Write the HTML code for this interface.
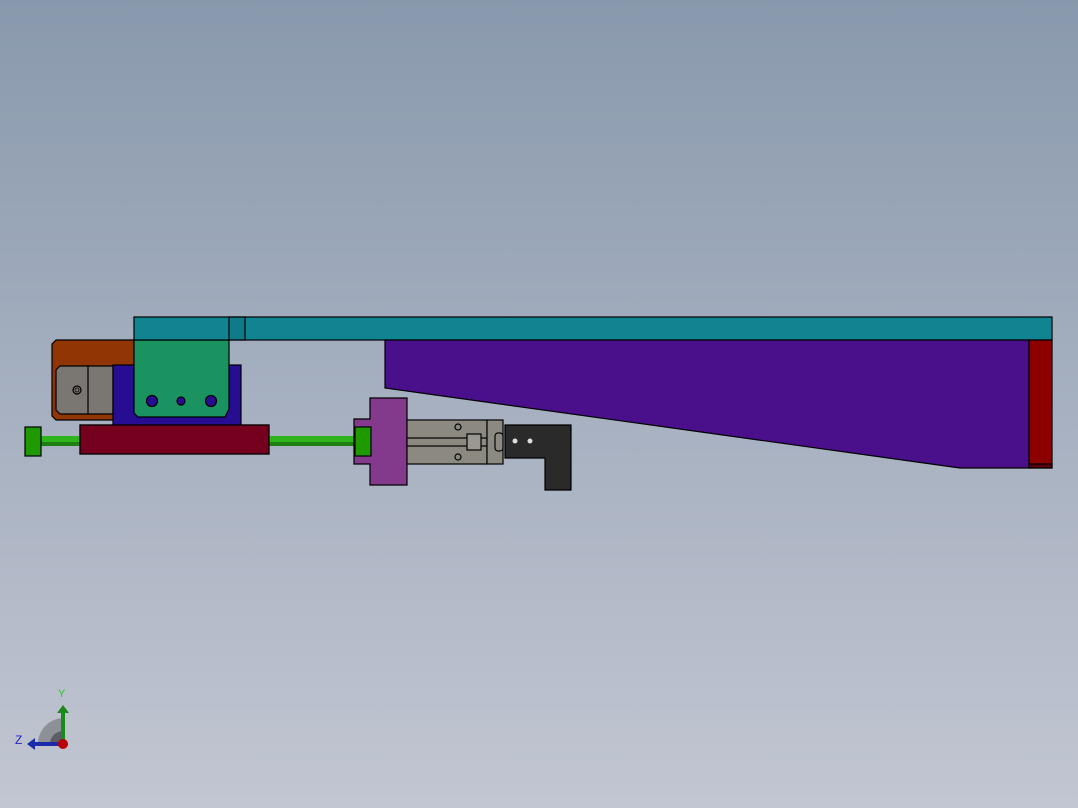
<!DOCTYPE html>
<html style="margin:0;padding:0;width:1078px;height:808px;overflow:hidden;background:#c2c6d2"><head><style>body{margin:0;padding:0;width:1078px;height:808px;overflow:hidden;background:linear-gradient(#8999ad,#a6b0c0 50%,#c2c6d2)}svg{display:block}</style></head><body>
<svg width="1078" height="808" viewBox="0 0 1078 808" xmlns="http://www.w3.org/2000/svg" stroke="#000" stroke-width="1.2">
<path d="M56,340 H134 V420 H56 L52,416 V344 Z" fill="#923505"/>
<path d="M60,366 H113 V414 H60 L56,410 V370 Z" fill="#7a7672"/>
<line x1="88" y1="366" x2="88" y2="414"/>
<circle cx="77" cy="390" r="4" fill="none"/><circle cx="77" cy="390" r="2" fill="none" stroke-width="0.8"/>
<rect x="113" y="365" width="128" height="65" fill="#260d91"/>
<rect x="80" y="425" width="189" height="29" fill="#74001d"/>
<path d="M134,340 H229 V409 L225,417 H138 L134,413 Z" fill="#1a9360"/>
<circle cx="152" cy="401" r="5.5" fill="#260d91"/><circle cx="181" cy="401" r="4" fill="#260d91"/><circle cx="211" cy="401" r="5.5" fill="#260d91"/>
<rect x="134" y="317" width="918" height="23" fill="#108591"/>
<rect x="229" y="317" width="16" height="23" fill="#0f7a88"/>
<path d="M385,340 H1029 V468 H960 L385,388 Z" fill="#4a108c"/>
<rect x="1029" y="340" width="23" height="128" fill="#8c0000"/>
<rect x="1029" y="464" width="23" height="4" fill="#5a0010"/>
<rect x="41" y="436" width="314" height="10" fill="#2fb51b" stroke="none"/>
<rect x="41" y="442" width="314" height="4" fill="#1e8012" stroke="none"/>
<rect x="80" y="425" width="189" height="29" fill="#74001d"/>
<rect x="25" y="427" width="16" height="29" fill="#1e9a00"/>
<path d="M370,398 H407 V485 H370 V464 H354 V419 H370 Z" fill="#833a8d"/>
<rect x="355" y="427" width="16" height="29" fill="#1e9a00"/>
<rect x="407" y="420" width="80" height="44" fill="#8c8a80"/>
<rect x="407" y="438" width="80" height="8" fill="#8c8a80"/>
<rect x="467" y="434" width="14" height="16" fill="#9a9890"/>
<circle cx="458" cy="427" r="3" fill="none"/><circle cx="458" cy="457" r="3" fill="none"/>
<rect x="487" y="420" width="16" height="44" fill="#8c8a80"/>
<rect x="495" y="433" width="8" height="18" rx="3" fill="#8c8a80"/>
<path d="M505,425 H571 V490 H545 V458 H505 Z" fill="#2a2a2a"/>
<circle cx="515" cy="441" r="2.5" fill="#ddd" stroke="none"/><circle cx="530" cy="441" r="2.5" fill="#ddd" stroke="none"/>
<g stroke="none">
<path d="M38,744 A26,26 0 0 1 63,718 V744 Z" fill="#8e9098"/>
<path d="M50,744 A13,13 0 0 1 63,731 V744 Z" fill="#5c5e64"/>
<rect x="61" y="712" width="4" height="32" fill="#1a8a1a"/>
<path d="M57,713 L63,705 L69,713 Z" fill="#1a8a1a"/>
<rect x="34" y="742" width="29" height="4" fill="#1a2aa8"/>
<path d="M35,738 L27,744 L35,750 Z" fill="#1a2aa8"/>
<circle cx="63" cy="744" r="5" fill="#b80000"/>
</g>
<text x="58" y="697" font-family="Liberation Sans,sans-serif" font-size="11" fill="#2c2" stroke="none">Y</text>
<text x="15" y="744" font-family="Liberation Sans,sans-serif" font-size="12" fill="#22c" stroke="none">Z</text>
</svg>
</body></html>
